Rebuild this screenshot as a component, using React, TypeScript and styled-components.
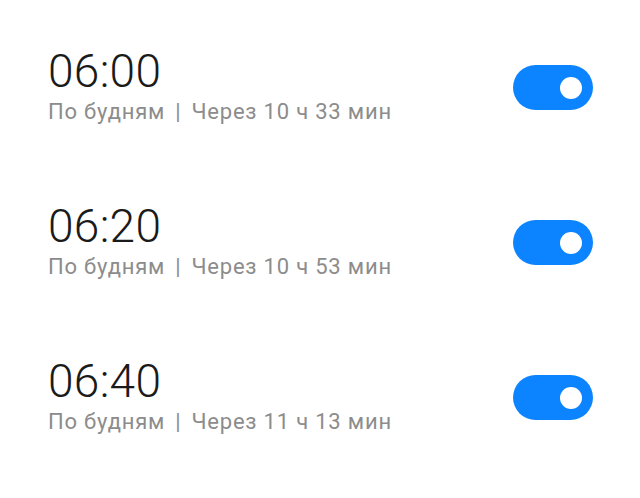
import React from 'react';
import styled, { createGlobalStyle } from 'styled-components';

const GlobalStyle = createGlobalStyle`
  html, body {
    margin: 0;
    padding: 0;
    background: #ffffff;
  }
  body {
    font-family: Roboto, "Noto Sans", "Liberation Sans", sans-serif;
  }
`;

const AlarmList = styled.div`
  display: flex;
  flex-direction: column;
  padding: 6px 47px 0 48px;
`;

const AlarmRow = styled.div`
  height: 155px;
  display: flex;
  align-items: center;
  justify-content: space-between;
`;

const AlarmInfo = styled.div`
  display: flex;
  flex-direction: column;
  margin-top: 3px;
`;

const Time = styled.div`
  font-size: 46px;
  line-height: 50px;
  color: #1a1a1a;
  font-weight: 300;
  letter-spacing: 0.3px;
`;

const Details = styled.div`
  font-size: 22px;
  line-height: 26px;
  letter-spacing: 0.8px;
  color: #8c8c8c;
  margin-top: 3px;
`;

const Divider = styled.span`
  margin: 0 10px;
`;

const Toggle = styled.div<{ $on: boolean }>`
  width: 80px;
  height: 45px;
  border-radius: 23px;
  background: ${p => (p.$on ? '#0d84ff' : '#d9d9d9')};
  display: flex;
  align-items: center;
  justify-content: ${p => (p.$on ? 'flex-end' : 'flex-start')};
  padding: 0 11px;
  box-sizing: border-box;
  margin-top: 8px;
`;

const Knob = styled.div`
  width: 22px;
  height: 22px;
  border-radius: 50%;
  background: #ffffff;
`;

const alarms = [
  { time: '06:00', repeat: 'По будням', left: 'Через 10 ч 33 мин' },
  { time: '06:20', repeat: 'По будням', left: 'Через 10 ч 53 мин' },
  { time: '06:40', repeat: 'По будням', left: 'Через 11 ч 13 мин' },
];

const App: React.FC = () => {
  return (
    <>
      <GlobalStyle />
      <AlarmList>
        {alarms.map(alarm => (
          <AlarmRow key={alarm.time}>
            <AlarmInfo>
              <Time>{alarm.time}</Time>
              <Details>
                {alarm.repeat}
                <Divider>|</Divider>
                {alarm.left}
              </Details>
            </AlarmInfo>
            <Toggle $on>
              <Knob />
            </Toggle>
          </AlarmRow>
        ))}
      </AlarmList>
    </>
  );
};

export default App;
